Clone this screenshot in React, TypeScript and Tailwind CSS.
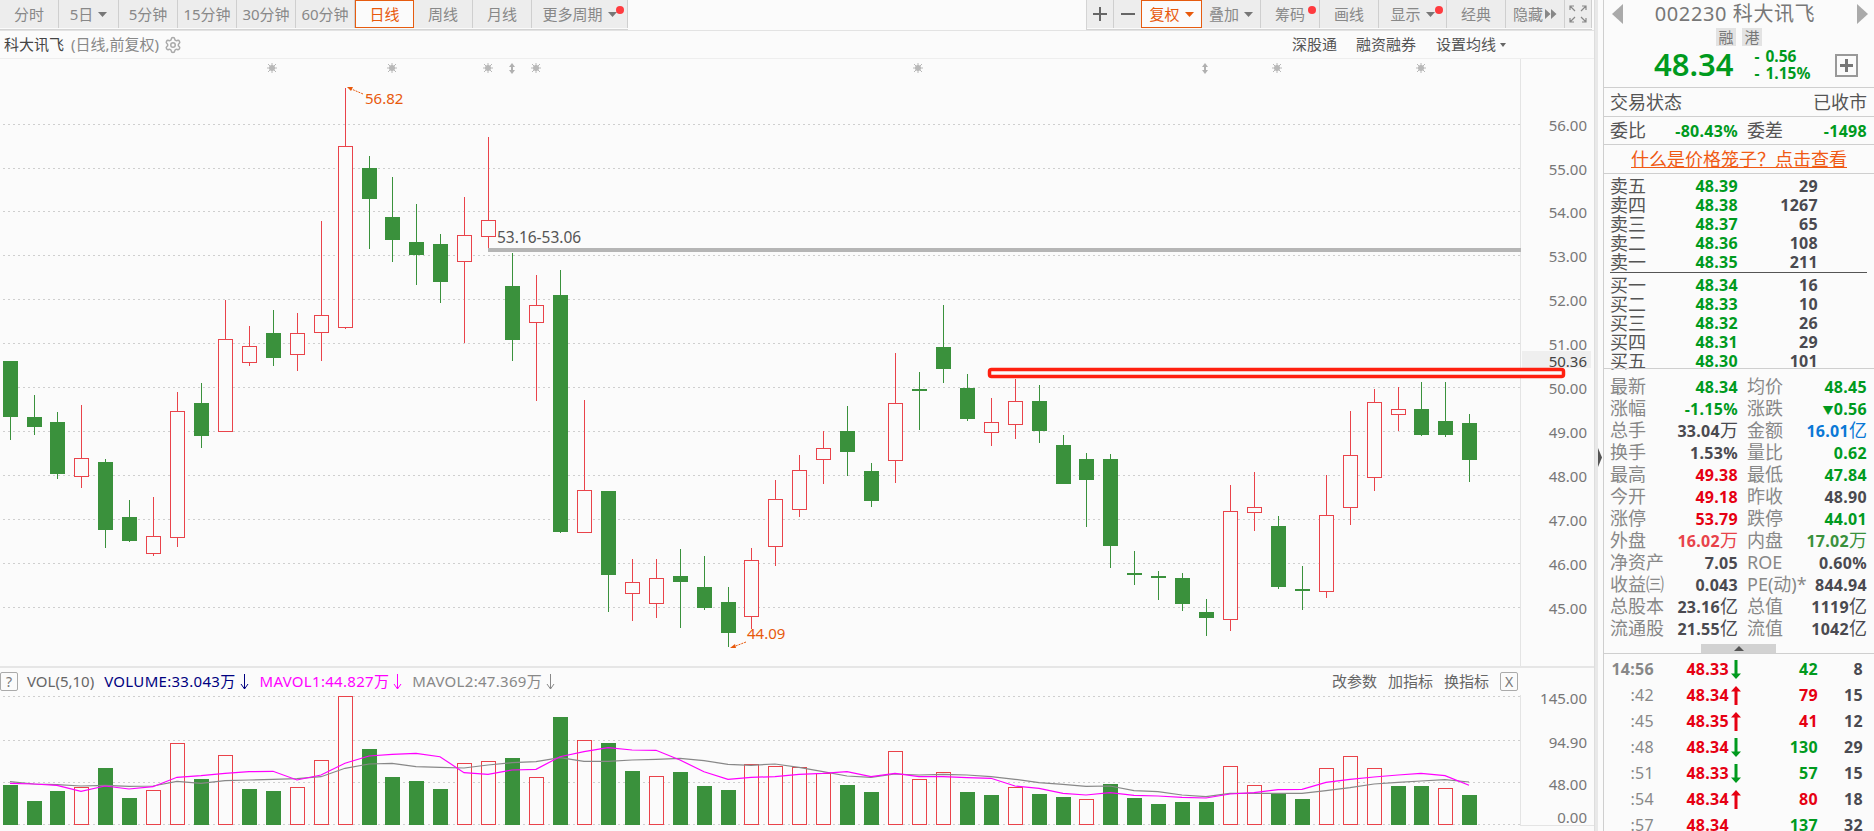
import { Settings } from "lucide-react";

const cx = (i: number) => Math.round(9.6 + 23.93 * i);

// high, bodyTop, bodyBottom, low, up(red)=1
const candles: number[][] = [
  [361, 361, 417, 440, 0], [395, 417, 427, 435, 0], [412, 422, 474, 479, 0], [405, 458, 476, 488, 1],
  [459, 462, 530, 548, 0], [500, 517, 541, 542, 0], [497, 536, 553, 556, 1], [392, 411, 537, 547, 1],
  [383, 403, 436, 448, 0], [300, 339, 431, 431, 1], [326, 346, 362, 366, 1], [310, 333, 358, 366, 0],
  [313, 333, 354, 371, 1], [221, 315, 332, 361, 1], [88, 146, 327, 329, 1], [156, 168, 199, 249, 0],
  [177, 217, 240, 262, 0], [204, 242, 255, 285, 0], [234, 244, 282, 303, 0], [197, 235, 261, 343, 1],
  [137, 220, 236, 252, 1], [253, 286, 340, 361, 0], [275, 305, 322, 401, 1], [270, 295, 532, 533, 0],
  [400, 490, 532, 532, 1], [491, 491, 575, 612, 0], [559, 582, 593, 621, 1], [559, 578, 603, 618, 1],
  [549, 576, 582, 628, 0], [556, 587, 608, 610, 0], [587, 602, 633, 647, 0], [548, 560, 616, 629, 1],
  [480, 499, 546, 566, 1], [455, 470, 509, 517, 1], [431, 448, 459, 484, 1], [406, 431, 452, 476, 0],
  [463, 471, 501, 507, 0], [353, 403, 460, 483, 1], [372, 389, 391, 430, 0], [305, 347, 369, 383, 0],
  [374, 388, 419, 421, 0], [398, 422, 432, 446, 1], [379, 401, 424, 439, 1], [385, 401, 431, 443, 0],
  [435, 445, 484, 484, 0], [453, 459, 480, 527, 0], [454, 459, 546, 568, 0], [551, 573, 575, 585, 0],
  [571, 576, 577, 600, 0], [573, 578, 604, 611, 0], [599, 612, 618, 636, 0], [485, 511, 619, 631, 1],
  [472, 507, 512, 531, 1], [516, 526, 587, 589, 0], [566, 589, 590, 610, 0], [475, 515, 591, 598, 1],
  [411, 455, 507, 525, 1], [389, 402, 477, 491, 1], [387, 409, 414, 431, 1], [382, 409, 435, 436, 0],
  [382, 421, 435, 437, 0], [414, 423, 460, 482, 0],
];

// top y in the zoomed volume strip (px * 3), up flag
const volumes: number[][] = [
  [375, 0], [423, 0], [393, 0], [382, 1], [324, 0], [414, 0], [391, 1], [250, 1], [357, 0], [286, 1],
  [387, 0], [393, 0], [382, 1], [301, 1], [109, 1], [267, 0], [351, 0], [363, 0], [387, 0], [310, 1],
  [304, 1], [294, 0], [352, 1], [171, 0], [241, 1], [249, 0], [333, 0], [349, 1], [336, 0], [378, 0],
  [390, 0], [313, 1], [319, 1], [320, 1], [338, 1], [375, 0], [396, 0], [274, 1], [358, 1], [337, 1],
  [396, 0], [405, 0], [382, 1], [402, 0], [411, 0], [418, 1], [372, 0], [414, 0], [432, 0], [426, 0],
  [426, 0], [319, 1], [376, 1], [402, 0], [417, 0], [325, 1], [289, 1], [325, 1], [378, 0], [378, 0],
  [385, 1], [405, 0],
];

const mavol1 = [370, 372, 376, 394, 378, 387, 380, 352, 347, 340, 335, 334, 360, 345, 310, 288, 283, 280, 290, 338, 343, 330, 328, 290, 275, 263, 270, 271, 300, 335, 358, 352, 350, 343, 340, 335, 350, 340, 350, 350, 353, 355, 378, 385, 400, 405, 398, 406, 408, 412, 414, 402, 398, 389, 388, 367, 358, 351, 345, 340, 347, 376];
const mavol2 = [365, 372, 374, 378, 376, 379, 378, 364, 370, 362, 360, 358, 356, 350, 325, 312, 310, 320, 322, 324, 315, 308, 305, 293, 304, 304, 300, 298, 295, 302, 313, 316, 312, 322, 335, 348, 352, 342, 345, 343, 345, 350, 358, 368, 373, 379, 378, 392, 395, 405, 410, 400, 400, 400, 400, 392, 383, 372, 367, 363, 359, 366];

const priceGrid = [
  [124, "56.00"], [168, "55.00"], [211, "54.00"], [255, "53.00"], [299, "52.00"], [343, "51.00"],
  [387, "50.00"], [431, "49.00"], [475, "48.00"], [519, "47.00"], [563, "46.00"], [607, "45.00"],
] as const;

const RED = "#e9434a";
const GREEN = "#3a913c";

function Caret({ color = "#777" }: { color?: string }) {
  return (
    <svg width="9" height="5" viewBox="0 0 9 5" className="shrink-0">
      <polygon points="0,0 9,0 4.5,5" fill={color} />
    </svg>
  );
}

function Dot() {
  return <span className="absolute top-[6px] right-[3px] w-[8px] h-[8px] rounded-full bg-[#ff3b3f]" />;
}

function Tab({ label, w, caret, dot, active }: { label: string; w: string; caret?: boolean; dot?: boolean; active?: boolean }) {
  return (
    <div
      className={
        w +
        " relative h-[28px] flex items-center justify-center gap-[5px] border-r text-[15px] " +
        (active
          ? "bg-[#fbfbfb] text-[#e8590c] border border-[#e65c10]"
          : "bg-[#ededed] text-[#888] border-[#cfcfcf]")
      }
    >
      {label}
      {caret && <Caret color={active ? "#e8590c" : "#777"} />}
      {dot && <Dot />}
    </div>
  );
}

function Toolbar() {
  return (
    <div className="h-[31px] flex justify-between border-b border-[#e3e3e3] pr-[2px] shrink-0">
      <div className="flex h-[29px] border-t border-b border-[#d4d4d4] box-content -mt-[1px]">
        <Tab label="分时" w="w-[59px]" />
        <Tab label="5日" w="w-[60px]" caret />
        <Tab label="5分钟" w="w-[59px]" />
        <Tab label="15分钟" w="w-[59px]" />
        <Tab label="30分钟" w="w-[59px]" />
        <Tab label="60分钟" w="w-[59px]" />
        <Tab label="日线" w="w-[59px]" active />
        <Tab label="周线" w="w-[59px]" />
        <Tab label="月线" w="w-[59px]" />
        <Tab label="更多周期" w="w-[96px]" caret dot />
      </div>
      <div className="flex h-[29px] border-t border-b border-l border-[#d4d4d4] box-content -mt-[1px]">
        <div className="w-[27px] h-[28px] bg-[#ededed] border-r border-[#cfcfcf] flex items-center justify-center">
          <svg width="16" height="16" viewBox="0 0 16 16"><path d="M8 1v14M1 8h14" stroke="#666" strokeWidth="2" /></svg>
        </div>
        <div className="w-[27px] h-[28px] bg-[#ededed] flex items-center justify-center">
          <svg width="16" height="16" viewBox="0 0 16 16"><path d="M1 8h14" stroke="#666" strokeWidth="2" /></svg>
        </div>
        <Tab label="复权" w="w-[61px]" caret active />
        <Tab label="叠加" w="w-[59px]" caret />
        <Tab label="筹码" w="w-[59px]" dot />
        <Tab label="画线" w="w-[59px]" />
        <Tab label="显示" w="w-[68px]" caret dot />
        <Tab label="经典" w="w-[59px]" />
        <div className="w-[59px] h-[28px] bg-[#ededed] border-r border-[#cfcfcf] flex items-center justify-center gap-[2px] text-[15px] text-[#888]">
          隐藏
          <svg width="12" height="10" viewBox="0 0 12 10"><path d="M0 0l5.500 5L0 10zM6 0l5.500 5L6 10z" fill="#888" /></svg>
        </div>
        <div className="w-[27px] h-[28px] bg-[#ededed] border-r border-[#cfcfcf] flex items-center justify-center">
          <svg width="18" height="18" viewBox="0 0 18 18" fill="none" stroke="#888" strokeWidth="1.200">
            <path d="M1 5V1h4M1 1l5 5M13 1h4v4M17 1l-5 5M1 13v4h4M1 17l5-5M13 17h4v-4M17 17l-5-5" />
          </svg>
        </div>
      </div>
    </div>
  );
}

function Star({ x }: { x: number }) {
  return (
    <g stroke="#b8b8b8" strokeWidth="1">
      <circle cx={x} cy={68} r={3} fill="#b8b8b8" stroke="none" />
      <path d={`M${x} 63v10M${x - 5} 68h10M${x - 4} 64l8 8M${x + 4} 64l-8 8`} />
    </g>
  );
}

function UpDown({ x }: { x: number }) {
  return <path d={`M${x} 63l-3 4h2v3h-2l3 4 3-4h-2v-3h2z`} fill="#b0b0b0" />;
}

function PriceChart() {
  return (
    <svg width="1594" height="607" viewBox="0 59 1594 607" className="block shrink-0">
      {priceGrid.map(([y, label]) => (
        <g key={label}>
          <line x1="3" x2="1523" y1={y + 0.5} y2={y + 0.5} stroke="#cfcfcf" strokeDasharray="2 3" />
          <text x="1587" y={y + 7} textAnchor="end" fontSize="15" fill="#777">{label}</text>
        </g>
      ))}
      <line x1="1520.500" x2="1520.500" y1="59" y2="666" stroke="#e4e4e4" />

      {[272, 392, 488, 536, 918, 1277, 1421].map((x) => <Star key={x} x={x} />)}
      <UpDown x={512} />
      <UpDown x={1205} />

      <g shapeRendering="crispEdges">
        {candles.map(([hi, top, bot, lo, up], i) => {
          const x = cx(i);
          const c = up ? RED : GREEN;
          return (
            <g key={i}>
              <rect x={x} y={hi} width="1" height={lo - hi} fill={c} />
              {up ? (
                <rect x={x - 6.5} y={top + 0.5} width="14" height={bot - top} fill="#fbfbfb" stroke={c} />
              ) : (
                <rect x={x - 7} y={top} width="15" height={Math.max(bot - top, 2)} fill={c} />
              )}
            </g>
          );
        })}
      </g>

      <rect x="488" y="248" width="1033" height="4" fill="#b5b5b5" shapeRendering="crispEdges" />
      <text x="497" y="243" fontSize="15.500" fill="#555">53.16-53.06</text>

      <path d="M363 94l-14-6" stroke="#e8590c" strokeDasharray="2 1" fill="none" />
      <path d="M347 87l6 0-2 4z" fill="#e8590c" />
      <text x="365" y="104" fontSize="15" fill="#e8590c">56.82</text>

      <path d="M746 642l-13 5" stroke="#e8590c" strokeDasharray="2 1" fill="none" />
      <path d="M730 648l5-4 1 4z" fill="#e8590c" />
      <text x="747" y="639" fontSize="15" fill="#e8590c">44.09</text>

      <rect x="1522" y="351" width="69" height="17" fill="#efefef" />
      <text x="1587" y="367" textAnchor="end" fontSize="15" fill="#444">50.36</text>
      <rect x="989.500" y="369.500" width="574" height="7" rx="2" fill="#fbfbfb" stroke="#ff2010" strokeWidth="3.500" />
    </svg>
  );
}

function VolumeChart() {
  const y = (t: number) => 660 + t / 3;
  const line = (pts: number[]) => pts.map((t, i) => `${cx(i)},${y(t).toFixed(1)}`).join(" ");
  return (
    <svg width="1594" height="136" viewBox="0 695 1594 136" className="block shrink-0 overflow-visible">
      {[696.5, 740.5, 782.5, 824.5].map((ly) => (
        <line key={ly} x1="3" x2="1523" y1={ly} y2={ly} stroke="#cfcfcf" strokeDasharray="2 3" />
      ))}
      <line x1="1520.500" x2="1520.500" y1="695" y2="825" stroke="#e4e4e4" />
      <line x1="1520" x2="1594" y1="825.500" y2="825.500" stroke="#e4e4e4" />
      <g shapeRendering="crispEdges">
        {volumes.map(([t, up], i) => {
          const x = cx(i);
          const top = Math.round(y(t));
          return up ? (
            <rect key={i} x={x - 6.5} y={top + 0.5} width="14" height={824 - top} fill="#fbfbfb" stroke={RED} />
          ) : (
            <rect key={i} x={x - 7} y={top} width="15" height={825 - top} fill={GREEN} />
          );
        })}
      </g>
      <polyline points={line(mavol2)} fill="none" stroke="#888" strokeWidth="1.200" />
      <polyline points={line(mavol1)} fill="none" stroke="#ff00ff" strokeWidth="1.200" />
      <text x="1587" y="704" textAnchor="end" fontSize="15" fill="#777">145.00</text>
      <text x="1587" y="748" textAnchor="end" fontSize="15" fill="#777">94.90</text>
      <text x="1587" y="790" textAnchor="end" fontSize="15" fill="#777">48.00</text>
      <text x="1587" y="823" textAnchor="end" fontSize="15" fill="#777">0.00</text>
    </svg>
  );
}

function DownArrow({ color }: { color: string }) {
  return (
    <svg width="9" height="16" viewBox="0 0 9 16" className="ml-[4px] shrink-0" fill="none" stroke={color}>
      <path d="M4.500 0v15M1 10l3.500 5L8 10" />
    </svg>
  );
}

function VolumeHeader() {
  return (
    <div className="relative z-10 h-[29px] border-t-2 border-[#e6e6e6] flex items-center text-[15px] shrink-0 pr-[76px]">
      <div className="w-[18px] h-[19px] border border-[#aaa] rounded-[2px] flex items-center justify-center text-[#777] text-[14px]">?</div>
      <span className="ml-[9px] text-[#666]">VOL(5,10)</span>
      <span className="ml-[10px] text-[#000080] flex items-center tracking-[0.3px]">VOLUME:33.043万<DownArrow color="#000080" /></span>
      <span className="ml-[11px] text-[#ff00ff] flex items-center tracking-[0.3px]">MAVOL1:44.827万<DownArrow color="#ff00ff" /></span>
      <span className="ml-[10px] text-[#888] flex items-center tracking-[0.3px]">MAVOL2:47.369万<DownArrow color="#888" /></span>
      <div className="ml-auto flex items-center gap-[11px] text-[#666]">
        <span>改参数</span>
        <span>加指标</span>
        <span>换指标</span>
        <div className="w-[18px] h-[19px] border border-[#aaa] rounded-[2px] flex items-center justify-center text-[#777] text-[14px]">X</div>
      </div>
    </div>
  );
}

const sells = [["卖五", "48.39", "29"], ["卖四", "48.38", "1267"], ["卖三", "48.37", "65"], ["卖二", "48.36", "108"], ["卖一", "48.35", "211"]];
const buys = [["买一", "48.34", "16"], ["买二", "48.33", "10"], ["买三", "48.32", "26"], ["买四", "48.31", "29"], ["买五", "48.30", "101"]];

const G = "text-[#009a1e]";
const R = "text-[#e60012]";
const K = "text-[#4a4a50]";

const stats: string[][] = [
  ["最新", "48.34", G, "均价", "48.45", G],
  ["涨幅", "-1.15%", G, "涨跌", "▼0.56", G],
  ["总手", "33.04万", K, "金额", "16.01亿", "text-[#0a78d6]"],
  ["换手", "1.53%", K, "量比", "0.62", G],
  ["最高", "49.38", R, "最低", "47.84", G],
  ["今开", "49.18", R, "昨收", "48.90", K],
  ["涨停", "53.79", R, "跌停", "44.01", G],
  ["外盘", "16.02万", "text-[#e8434a]", "内盘", "17.02万", "text-[#3a913c]"],
  ["净资产", "7.05", K, "ROE", "0.60%", K],
  ["收益㈢", "0.043", K, "PE(动)*", "844.94", K],
  ["总股本", "23.16亿", K, "总值", "1119亿", K],
  ["流通股", "21.55亿", K, "流值", "1042亿", K],
];

const trades: [string, string, string, string, string][] = [
  ["14:56", "48.33", "d", "42", "8"],
  [":42", "48.34", "u", "79", "15"],
  [":45", "48.35", "u", "41", "12"],
  [":48", "48.34", "d", "130", "29"],
  [":51", "48.33", "d", "57", "15"],
  [":54", "48.34", "u", "80", "18"],
  [":57", "48.34", "", "137", "32"],
];

function Value({ v, cls }: { v: string; cls: string }) {
  const m = v.match(/^(▼?)(.*?)([万亿]?)$/);
  return (
    <span className={cls + " font-bold text-[16px] tracking-[0.3px] whitespace-nowrap"}>
      {m?.[1] && <span className="text-[11px]">{m[1]}</span>}
      {m?.[2]}
      <span className="font-normal text-[18px] tracking-normal">{m?.[3]}</span>
    </span>
  );
}

function BookRow({ row }: { row: string[] }) {
  return (
    <div className="grid grid-cols-[60px_68px_80px] h-[19px] items-center text-[#555]">
      <span className="text-[18px] leading-[19px]">{row[0]}</span>
      <span className={G + " text-right font-bold text-[16px] tracking-[0.3px]"}>{row[1]}</span>
      <span className={K + " text-right font-bold text-[16px] tracking-[0.3px]"}>{row[2]}</span>
    </div>
  );
}

function TradeArrow({ dir }: { dir: string }) {
  if (!dir) return <span />;
  const up = dir === "u";
  return (
    <svg width="10" height="19" viewBox="0 0 10 19" className="ml-[2px]">
      <path
        d={up ? "M5 0l5 5.500H6.500V19h-3V5.500H0z" : "M3.500 0h3v13.500H10L5 19 0 13.500h3.500z"}
        fill={up ? "#e60012" : "#009a1e"}
      />
    </svg>
  );
}

function QuotePanel() {
  return (
    <div className="w-[271px] shrink-0 h-[831px] overflow-hidden border-l border-[#cfcfcf] flex flex-col">
      <div className="h-[88px] border-b border-[#cfcfcf] shrink-0 flex flex-col items-center relative">
        <div className="h-[27px] w-full flex items-center justify-between pl-[8px] pr-[6px] text-[20px] text-[#777]">
          <svg width="11" height="20" viewBox="0 0 11 20"><polygon points="11,0 11,20 0,10" fill="#aaa" /></svg>
          <span className="tracking-[0.6px] mr-[10px]">002230 科大讯飞</span>
          <svg width="11" height="20" viewBox="0 0 11 20"><polygon points="0,0 0,20 11,10" fill="#aaa" /></svg>
        </div>
        <div className="flex gap-[6px] mt-[1px] text-[15px] text-[#777]">
          <span className="w-[20px] h-[18px] bg-[#e3e3e3] flex items-center justify-center">融</span>
          <span className="w-[20px] h-[18px] bg-[#e3e3e3] flex items-center justify-center">港</span>
        </div>
        <div className="flex items-center w-full h-[38px] pl-[50px]">
          <span className={G + " text-[31px] font-semibold leading-[36px] -mt-[3px]"}>48.34</span>
          <div className={G + " ml-[21px] flex flex-col text-[15.500px] font-bold leading-[17px]"}>
            <span className="flex"><span className="w-[11px]">-</span>0.56</span>
            <span className="flex"><span className="w-[11px]">-</span>1.15%</span>
          </div>
          <div className="ml-auto mr-[16px] w-[23px] h-[23px] border-2 border-[#999] flex items-center justify-center">
            <svg width="13" height="13" viewBox="0 0 13 13"><path d="M6.500 0v13M0 6.500h13" stroke="#777" strokeWidth="3" /></svg>
          </div>
        </div>
      </div>
      <div className="h-[29px] border-b border-[#cfcfcf] shrink-0 flex items-center justify-between pl-[6px] pr-[7px] text-[18px] text-[#555]">
        <span>交易状态</span>
        <span>已收市</span>
      </div>
      <div className="h-[28px] border-b border-[#cfcfcf] shrink-0 grid grid-cols-[128px_120px] gap-x-[9px] items-center pl-[6px] text-[18px] text-[#555]">
        <div className="flex justify-between items-center"><span>委比</span><Value v="-80.43%" cls={G} /></div>
        <div className="flex justify-between items-center"><span>委差</span><Value v="-1498" cls={G} /></div>
      </div>
      <div className="h-[29px] border-b border-[#cfcfcf] shrink-0 flex items-center justify-center text-[18px] text-[#f05a14] underline">
        什么是价格笼子？点击查看
      </div>
      <div className="shrink-0 pl-[6px] pr-[7px]">
        {sells.map((r) => <BookRow key={r[0]} row={r} />)}
        <div className="h-[1px] bg-[#555] mt-[3px]" />
        {buys.map((r) => <BookRow key={r[0]} row={r} />)}
      </div>
      <div className="shrink-0 border-t border-[#cfcfcf] pl-[6px] pt-[4px] h-[285px] flex flex-col relative">
        {stats.map((s) => (
          <div key={s[0]} className="grid grid-cols-[128px_120px] gap-x-[9px] h-[22px] shrink-0 items-center text-[18px] text-[#888]">
            <div className="flex justify-between items-center"><span className="whitespace-nowrap">{s[0]}</span><Value v={s[1]} cls={s[2]} /></div>
            <div className="flex justify-between items-center"><span className="whitespace-nowrap">{s[3]}</span><Value v={s[4]} cls={s[5]} /></div>
          </div>
        ))}
        <div className="absolute left-[97px] bottom-0 w-[75px] h-[9px] bg-[#d2d2d2] flex items-center justify-center">
          <svg width="10" height="5" viewBox="0 0 10 5"><polygon points="5,0 10,5 0,5" fill="#555" /></svg>
        </div>
      </div>
      <div className="shrink-0 border-t border-[#cfcfcf] pl-[6px] pt-[2px]">
        {trades.map((t) => (
          <div key={t[0]} className="grid grid-cols-[44px_75px_16px_73px_45px] h-[26px] items-center">
            <span className={(t[0] === "14:56" ? "font-bold text-[#888] " : "text-[#888] ") + "text-right text-[16px] tracking-[0.3px]"}>{t[0]}</span>
            <span className="text-right font-bold text-[16px] tracking-[0.3px] text-[#e60012]">{t[1]}</span>
            <TradeArrow dir={t[2]} />
            <span className={(t[2] === "u" ? "text-[#e60012] " : "text-[#009a1e] ") + "text-right font-bold text-[16px] tracking-[0.3px]"}>{t[3]}</span>
            <span className={K + " text-right font-bold text-[16px] tracking-[0.3px]"}>{t[4]}</span>
          </div>
        ))}
      </div>
    </div>
  );
}

export default function App() {
  return (
    <div className="w-[1874px] h-[831px] overflow-hidden flex bg-[#fbfbfb] font-['Noto_Sans','Noto_Sans_CJK_SC',sans-serif]">
      <div className="w-[1594px] shrink-0 flex flex-col">
        <Toolbar />
        <div className="h-[28px] shrink-0 flex items-center justify-between pl-[4px] pr-[88px] text-[15px] border-b border-[#eee]">
          <div className="flex items-center">
            <span className="text-[#444]">科大讯飞</span>
            <span className="text-[#888] ml-[7px]">(日线,前复权)</span>
            <Settings size={18} color="#aaa" className="ml-[5px]" />
          </div>
          <div className="flex items-center text-[#555]">
            <span>深股通</span>
            <span className="ml-[19px]">融资融券</span>
            <span className="ml-[20px]">设置均线</span>
            <svg width="6" height="4" viewBox="0 0 6 4" className="ml-[4px]"><polygon points="0,0 6,0 3,4" fill="#666" /></svg>
          </div>
        </div>
        <PriceChart />
        <VolumeHeader />
        <VolumeChart />
      </div>
      <div className="w-[9px] shrink-0 flex h-[831px]">
        <div className="w-[4px] bg-[#e8e8e8] border-l border-[#ddd]" />
        <div className="flex-1 flex items-center h-[914px]">
          <svg width="4" height="19" viewBox="0 0 4 19"><polygon points="0,0 4,9.500 0,19" fill="#555" /></svg>
        </div>
      </div>
      <QuotePanel />
    </div>
  );
}
